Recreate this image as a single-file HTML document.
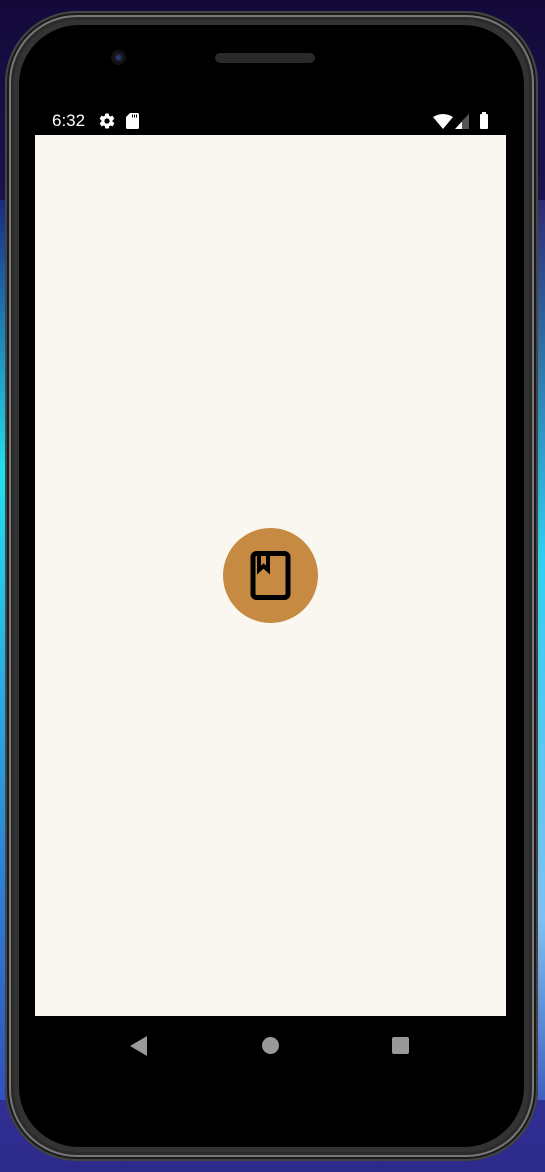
<!DOCTYPE html>
<html><head><meta charset="utf-8"><style>
html,body{margin:0;padding:0;}
body{width:545px;height:1172px;position:relative;overflow:hidden;
background:linear-gradient(180deg,#140a3a 0%,#1b1450 20%,#1f3a9a 45%,#2a48b0 60%,#3a3aa8 80%,#2c2a8a 100%);font-family:"Liberation Sans",sans-serif;}
.glow{position:absolute;left:0;top:200px;width:8px;height:900px;background:linear-gradient(180deg,#1a2a80,#20e0f0 30%,#2aa0e0 60%,#3050c0);}
.glowr{position:absolute;right:0;top:200px;width:8px;height:900px;background:linear-gradient(180deg,#302a70,#30d0f0 40%,#80c0f0 80%,#4060c0);}
.phone{position:absolute;left:5px;top:11px;width:533px;height:1150px;border-radius:72px;background:#333;box-shadow:inset 0 0 0 2px #444,inset 0 0 0 4px #1a1a1a,inset 0 0 0 6px #777,inset 0 0 0 9px #2a2a2a;}
.inner{position:absolute;left:14px;top:14px;right:14px;bottom:14px;border-radius:60px;background:#000;}
.screen{position:absolute;left:35px;top:135px;width:471px;height:881px;background:#faf7f0;}
.cam{position:absolute;left:111px;top:50px;width:15px;height:15px;border-radius:50%;background:#1a1f30;box-shadow:inset 0 0 0 3px #111;}
.cam::after{content:"";position:absolute;left:5px;top:5px;width:5px;height:5px;border-radius:50%;background:#2a3a6a;}
.spk{position:absolute;left:215px;top:53px;width:100px;height:10px;border-radius:5px;background:#2a2a2a;}
.time{position:absolute;left:52px;top:111px;color:#fff;font-size:17px;}
.circ{position:absolute;left:223px;top:528px;width:95px;height:95px;border-radius:50%;background:#c68a42;}
</style></head><body>
<div class="glow"></div><div class="glowr"></div>
<div class="phone"><div class="inner"></div></div>
<div class="cam"></div><div class="spk"></div>
<div class="time">6:32</div>
<svg style="position:absolute;left:98px;top:112px" width="18" height="18" viewBox="0 0 24 24"><path fill="#fff" d="M19.4 13c.04-.3.1-.65.1-1s-.06-.7-.1-1l2.1-1.6c.2-.15.25-.43.12-.65l-2-3.46c-.12-.22-.4-.3-.6-.22l-2.5 1c-.52-.4-1.080-.73-1.7-.98L14.5 2.4c-.04-.24-.25-.4-.5-.4h-4c-.25 0-.46.16-.5.4l-.37 2.65c-.6.25-1.17.6-1.7.98l-2.5-1c-.22-.08-.48 0-.6.22l-2 3.46c-.13.22-.07.5.12.65L4.6 11c-.04.3-.1.65-.1 1s.06.7.1 1l-2.1 1.6c-.2.15-.25.43-.12.65l2 3.46c.12.22.4.3.6.22l2.5-1c.52.4 1.08.73 1.7.98l.37 2.65c.04.24.25.4.5.4h4c.25 0 .46-.16.5-.4l.37-2.65c.6-.25 1.17-.6 1.7-.98l2.5 1c.22.08.48 0 .6-.22l2-3.46c.12-.22.07-.5-.12-.65zM12 15.5A3.5 3.5 0 1 1 12 8.5a3.5 3.5 0 0 1 0 7z"/></svg>
<svg style="position:absolute;left:126px;top:113px" width="13" height="16" viewBox="0 0 13 16"><path fill="#fff" d="M4 0h7.5A1.5 1.5 0 0 1 13 1.5v13A1.5 1.5 0 0 1 11.5 16h-10A1.5 1.5 0 0 1 0 14.5V4z"/><rect x="6" y="1.5" width="1" height="3" fill="#000"/><rect x="8" y="1.5" width="1" height="3" fill="#000"/><rect x="10" y="1.5" width="1" height="3" fill="#000"/></svg>
<svg style="position:absolute;left:433px;top:114px" width="20" height="15" viewBox="0 0 20 15"><path fill="#fff" d="M0 3Q10-3 20 3L10 15z"/></svg>
<svg style="position:absolute;left:455px;top:114px" width="14" height="15" viewBox="0 0 14 15"><path fill="#fff" d="M14 0V15H0z"/><path fill="#555" d="M14 0V15H7V7z"/></svg>
<div style="position:absolute;left:480px;top:114px;width:8px;height:15px;background:#fff;border-radius:1px"></div>
<div style="position:absolute;left:482px;top:112px;width:4px;height:3px;background:#fff"></div>
<div class="screen"></div>
<div class="circ"></div>
<svg style="position:absolute;left:248px;top:549px" width="45" height="53" viewBox="0 0 45 53"><rect x="5" y="4.5" width="35" height="44" rx="3.5" fill="none" stroke="#000" stroke-width="5"/><path d="M11 4V21L15.5 17L20 21V4" fill="none" stroke="#000" stroke-width="4"/></svg>
<svg style="position:absolute;left:130px;top:1036px" width="18" height="20" viewBox="0 0 18 20"><path fill="#999" d="M17 0V20L0 10z"/></svg>
<div style="position:absolute;left:262px;top:1037px;width:17px;height:17px;border-radius:50%;background:#999"></div>
<div style="position:absolute;left:392px;top:1037px;width:17px;height:17px;border-radius:2px;background:#999"></div>
</body></html>
